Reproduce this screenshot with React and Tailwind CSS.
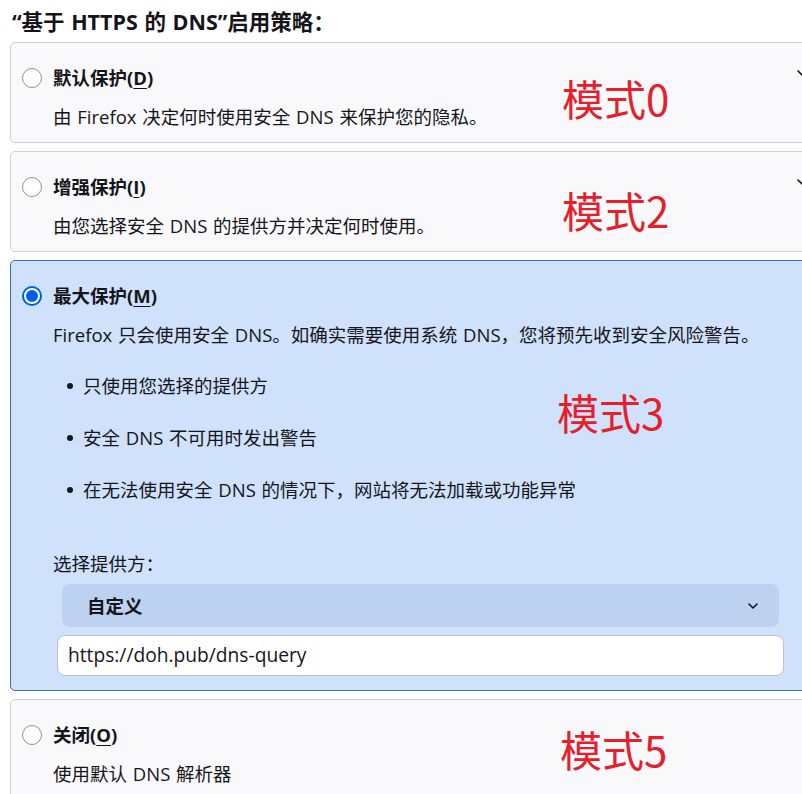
import React from "react";

const FONT = { fontFamily: '"Open Sans", "Noto Sans CJK SC", sans-serif' };
const RED = { fontFamily: '"Noto Sans CJK SC", sans-serif' };

function Radio({ checked }) {
  if (checked) {
    return (
      <div className="w-[20px] h-[20px] shrink-0 rounded-full bg-[#0061e0] p-[2px]">
        <div className="w-full h-full rounded-full border-[2px] border-white bg-[#0061e0]" />
      </div>
    );
  }
  return <div className="w-[20px] h-[20px] shrink-0 rounded-full border border-[#8f8f9d] bg-white" />;
}

function Chevron({ className }) {
  return (
    <svg className={className} width="10" height="6" viewBox="0 0 10 6" fill="none">
      <path d="M1 1l4 4 4-4" stroke="#15141a" strokeWidth="1.6" strokeLinecap="round" strokeLinejoin="round" />
    </svg>
  );
}

function Label({ text, keyChar }) {
  return (
    <span className="font-bold">
      {text}(<span className="underline underline-offset-[3px]">{keyChar}</span>)
    </span>
  );
}

function Card({ checked, label, keyChar, desc, chevron, children }) {
  return (
    <div
      className={
        "w-[808px] rounded-[5px] border pt-[21px] pb-[11px] pl-[11px] pr-[10px] " +
        (checked ? "bg-[#cfe1fb] border-[#3a70ad]" : "bg-[#f9f9fb] border-[#cfcfd8]")
      }
    >
      <div className="flex items-start">
        <div className="flex items-center h-[28px] gap-[11px]">
          <Radio checked={checked} />
          <Label text={label} keyChar={keyChar} />
        </div>
        <div className="flex-1" />
        {chevron && <Chevron className="mt-[6px]" />}
      </div>
      <div className="ml-[31px] mt-[11px]">
        <div className="leading-[28px]">{desc}</div>
        {children}
      </div>
    </div>
  );
}

function Bullet({ children }) {
  return (
    <div className="flex items-center h-[28px]">
      <span className="ml-[14px] w-[6px] h-[6px] rounded-full bg-[#15141a]" />
      <span className="ml-[10px]">{children}</span>
    </div>
  );
}

export default function App() {
  return (
    <div className="w-[802px] h-[794px] overflow-hidden bg-white text-[#15141a] text-[18.5px] [word-spacing:1px] relative" style={FONT}>
      <div className="pl-[10px] pt-[8px]">
        <div className="pl-[2px] h-[28px] leading-[28px] text-[21.5px] font-bold">“基于 HTTPS 的 DNS”启用策略：</div>
        <div className="mt-[6px] flex flex-col gap-[8px]">
          <Card label="默认保护" keyChar="D" chevron desc="由 Firefox 决定何时使用安全 DNS 来保护您的隐私。" />
          <Card label="增强保护" keyChar="I" chevron desc="由您选择安全 DNS 的提供方并决定何时使用。" />
          <Card checked label="最大保护" keyChar="M" desc="Firefox 只会使用安全 DNS。如确实需要使用系统 DNS，您将预先收到安全风险警告。">
            <div className="mt-[23px] flex flex-col gap-[24px]">
              <Bullet>只使用您选择的提供方</Bullet>
              <Bullet>安全 DNS 不可用时发出警告</Bullet>
              <Bullet>在无法使用安全 DNS 的情况下，网站将无法加载或功能异常</Bullet>
            </div>
            <div className="mt-[46px] leading-[28px]">选择提供方：</div>
            <div className="mt-[6px] ml-[9px] w-[717px] h-[43px] rounded-[8px] bg-[#bdd1f0] flex items-center pl-[25px] pr-[21px]">
              <span className="font-bold flex-1">自定义</span>
              <Chevron />
            </div>
            <div className="mt-[8px] ml-[4px] w-[727px] h-[41px] rounded-[8px] bg-white border border-[#b9c3d3] flex items-center pl-[10px] text-[19.2px]">
              https://doh.pub/dns-query
            </div>
            <div className="h-[3px]" />
          </Card>
          <Card label="关闭" keyChar="O" desc="使用默认 DNS 解析器" />
        </div>
      </div>
      <div className="absolute left-[562px] top-[77px] text-[42px] leading-[42px] text-[#e5202a] [word-spacing:0px]" style={RED}>模式0</div>
      <div className="absolute left-[562px] top-[189px] text-[42px] leading-[42px] text-[#e5202a] [word-spacing:0px]" style={RED}>模式2</div>
      <div className="absolute left-[557px] top-[391px] text-[42px] leading-[42px] text-[#e5202a] [word-spacing:0px]" style={RED}>模式3</div>
      <div className="absolute left-[560px] top-[728px] text-[42px] leading-[42px] text-[#e5202a] [word-spacing:0px]" style={RED}>模式5</div>
    </div>
  );
}
